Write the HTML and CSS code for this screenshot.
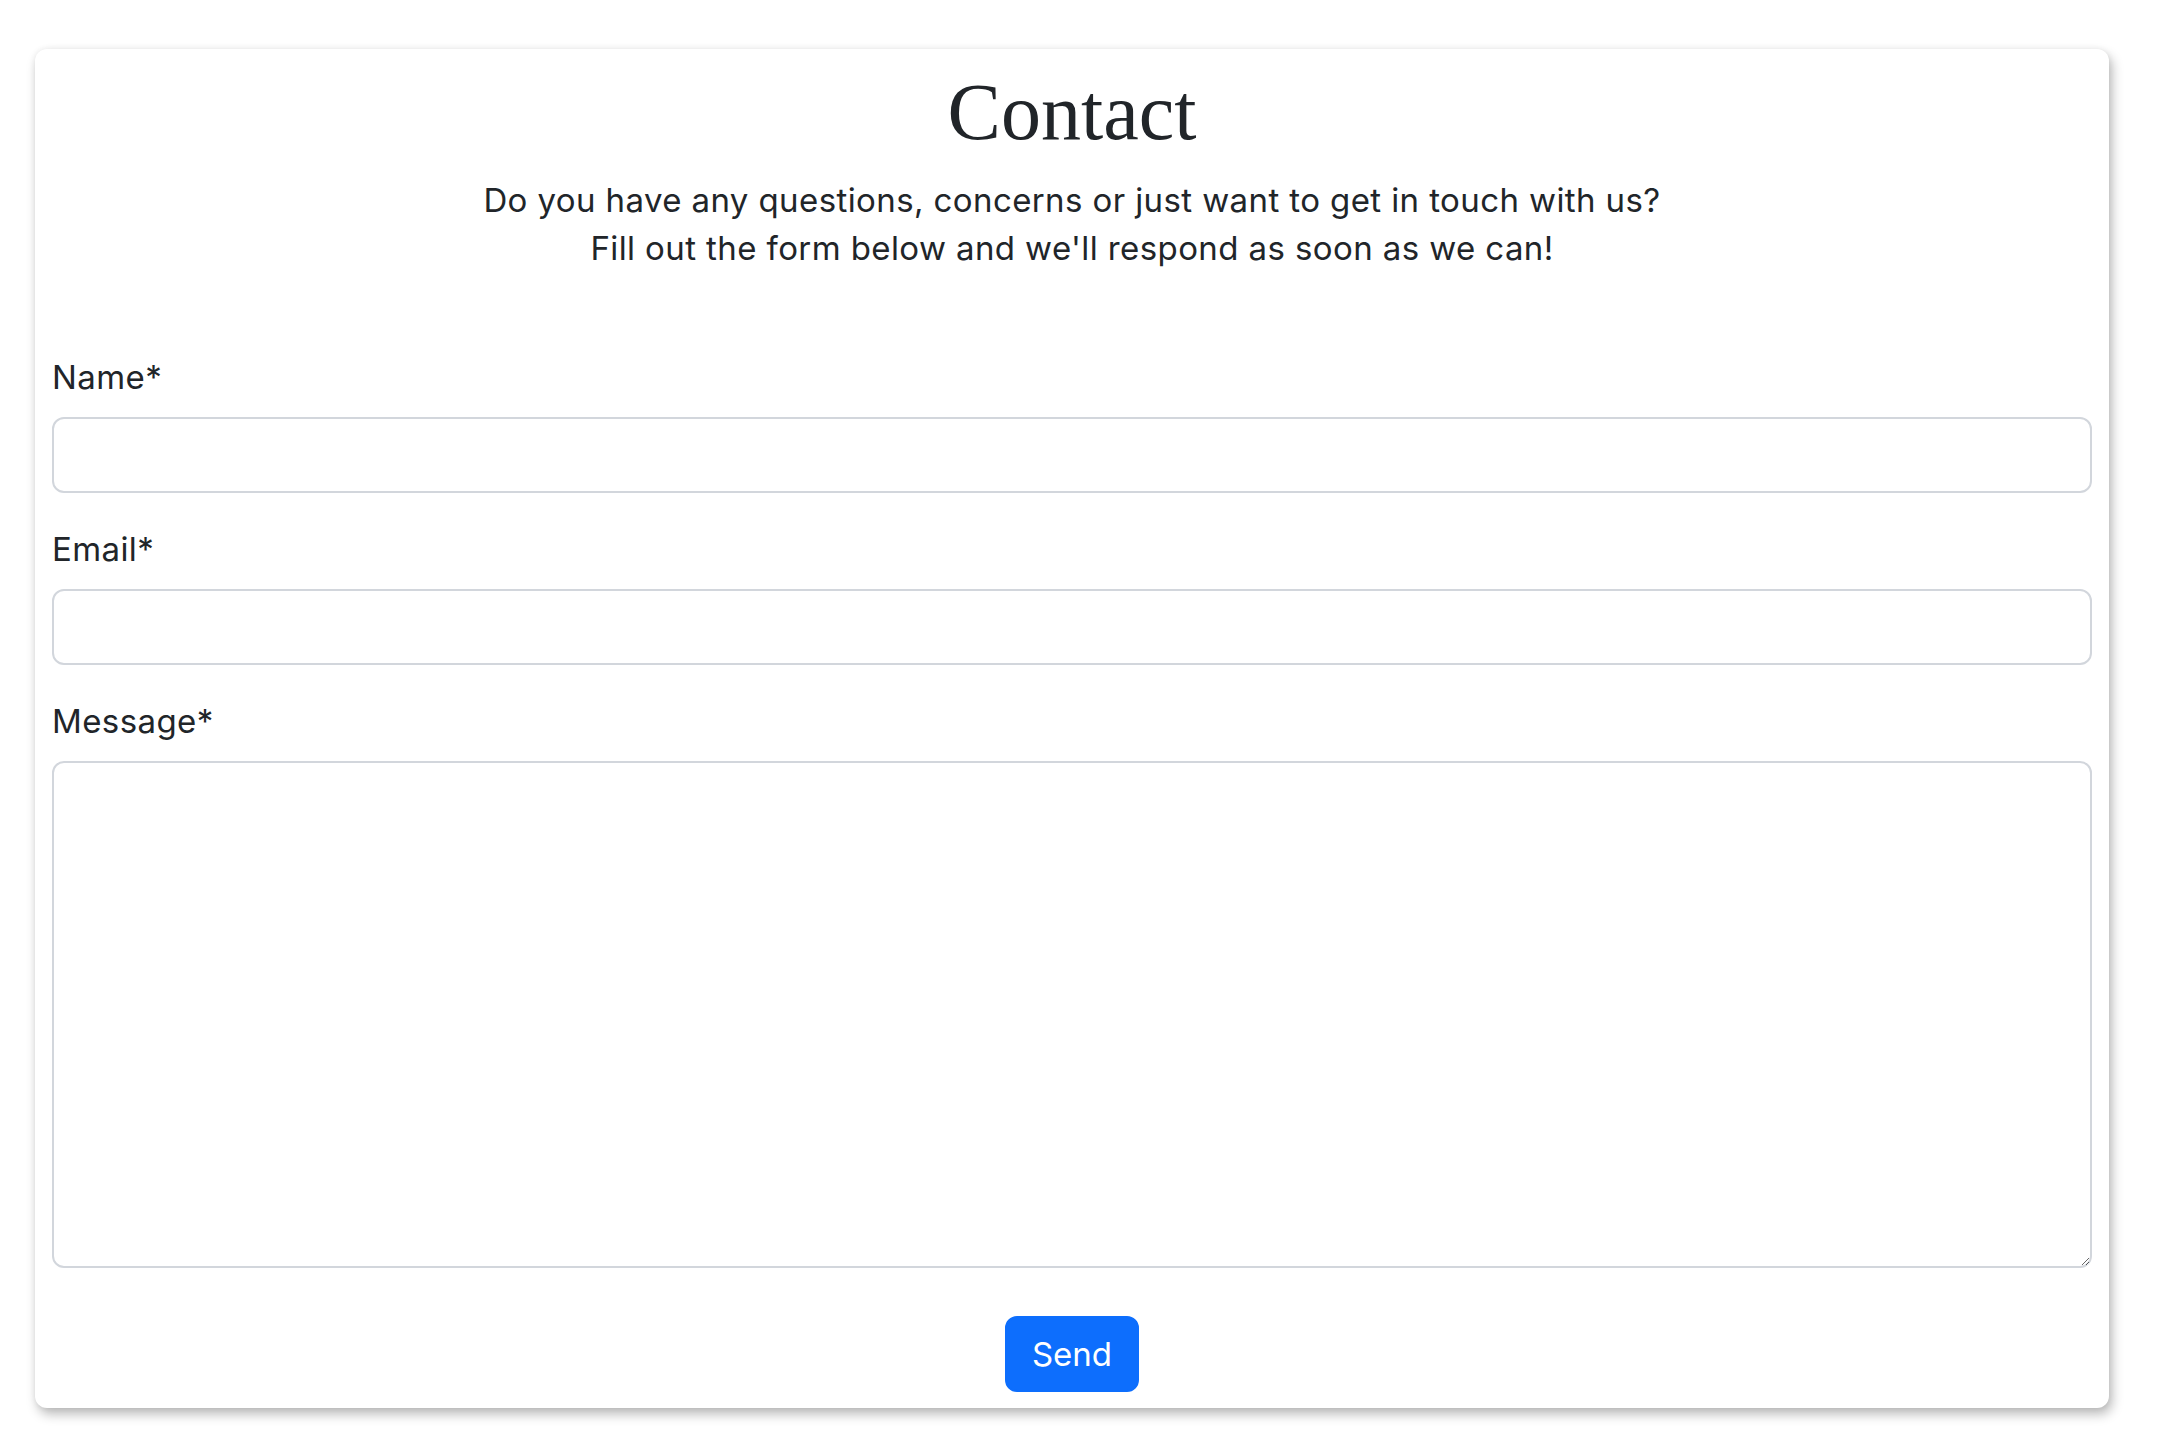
FILE: index.html
```html
<!DOCTYPE html>
<html lang="en">
<head>
<meta charset="utf-8">
<title>Contact</title>
<link rel="stylesheet" href="styles.css">
</head>
<body>
<div class="page">
  <section class="card">
    <h1 class="title">Contact</h1>
    <p class="lead">Do you have any questions, concerns or just want to get in touch with us?<br>Fill out the form below and we'll respond as soon as we can!</p>
    <form class="form">
      <div class="field">
        <label class="label" for="name">Name*</label>
        <input class="control" id="name" type="text">
      </div>
      <div class="field">
        <label class="label" for="email">Email*</label>
        <input class="control" id="email" type="email">
      </div>
      <div class="field">
        <label class="label" for="message">Message*</label>
        <textarea class="control area" id="message"></textarea>
      </div>
      <div class="actions">
        <button class="btn" type="button">Send</button>
      </div>
    </form>
  </section>
</div>
</body>
</html>
```

FILE: styles.css
```css
* { box-sizing: border-box; }
html, body { margin: 0; padding: 0; background: #fff; }
body {
  font-family: "Inter", "DejaVu Sans", sans-serif;
  font-size: 33px;
  letter-spacing: 0.4px;
  line-height: 48px;
  color: #212529;
}
.page {
  padding: 49px 0 40px 35px;
}
.card {
  width: 2074px;
  background: #fff;
  border-radius: 12px;
  padding: 15px 17px 16px 17px;
  box-shadow: 3px 6px 12px rgba(0, 0, 0, 0.28), 0 0 6px rgba(0, 0, 0, 0.06);
}
.title {
  margin: 0 0 16px;
  font-family: "Liberation Serif", serif;
  font-weight: 400;
  font-size: 80px;
  letter-spacing: 0;
  line-height: 1.2;
  text-align: center;
  color: #212529;
}
.lead {
  margin: 0 0 81px;
  text-align: center;
}
.form { margin: 0; }
.field {
  display: flex;
  flex-direction: column;
  margin-bottom: 32px;
}
.label {
  margin-bottom: 16px;
}
.control {
  display: block;
  width: 100%;
  height: 76px;
  padding: 12px 24px;
  font: inherit;
  color: #212529;
  background: #fff;
  border: 2px solid #d2d6dc;
  border-radius: 12px;
  outline: none;
}
.area {
  height: 507px;
  resize: vertical;
}
.actions {
  display: flex;
  justify-content: center;
  padding-top: 16px;
}
.btn {
  height: 76px;
  padding: 0 25px;
  font: inherit;
  color: #fff;
  background: #0d6efd;
  border: 2px solid #0d6efd;
  border-radius: 12px;
}
```
